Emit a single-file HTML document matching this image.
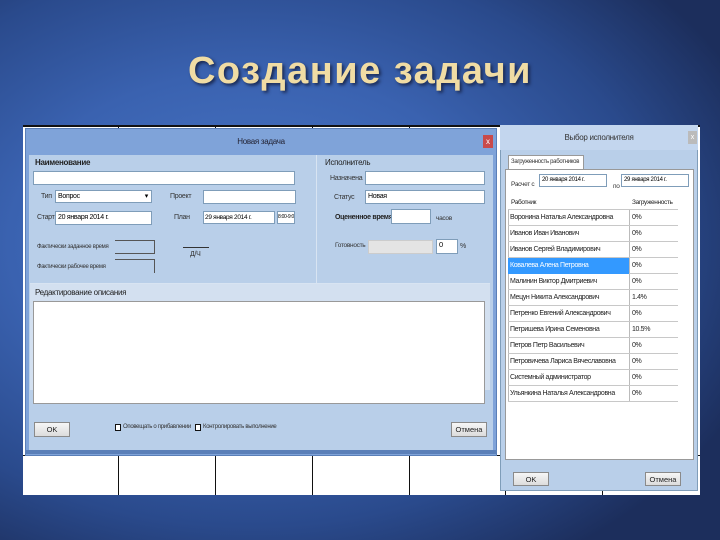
<!DOCTYPE html>
<html><head><meta charset="utf-8"><style>
*{margin:0;padding:0;box-sizing:border-box}
body{width:720px;height:540px;overflow:hidden;position:relative;font-family:"Liberation Sans",sans-serif;
background:radial-gradient(ellipse 75% 70% at 35% 45%,#4a78c8 0%,#3a62b0 45%,#2a4a8c 75%,#1c2e5c 100%);}
.a{position:absolute}
h1{position:absolute;left:0;width:720px;top:50px;text-align:center;font:bold 38px "Liberation Sans",sans-serif;color:#f0dca4;text-shadow:2px 2px 3px #1a2850;letter-spacing:1.5px}
.t{font-size:7px;color:#333;white-space:nowrap;letter-spacing:-0.3px}
.in{background:#fff;border:1px solid #7f9db9;white-space:nowrap;overflow:hidden;letter-spacing:-0.3px}
.vl{position:absolute;top:125px;height:370px;width:1px;background:#111}
.btn{position:absolute;background:linear-gradient(#f6f6f6,#dcdcdc);border:1px solid #8a8a8a;font-size:7.5px;text-align:center;line-height:13px;color:#222}
.row{position:absolute;left:508px;width:170px;height:16px;border-bottom:1px solid #c8c8c8;font-size:7px;color:#222;line-height:15px;letter-spacing:-0.35px;white-space:nowrap}
.row span{position:absolute}
</style></head><body>
<h1>Создание задачи</h1>
<div class="a" style="left:23px;top:125px;width:677px;height:370px;background:#fff"></div>
<div class="a" style="left:23px;top:125px;width:677px;height:2px;background:#111"></div>
<div class="a" style="left:23px;top:455px;width:677px;height:1px;background:#111"></div>
<div class="vl" style="left:118px"></div><div class="vl" style="left:215px"></div><div class="vl" style="left:312px"></div><div class="vl" style="left:409px"></div><div class="vl" style="left:505px"></div><div class="vl" style="left:602px"></div>

<!-- left dialog -->
<div class="a" style="left:25px;top:128px;width:472px;height:328px;background:#7fa3d9;border:1px solid #5a7fb8"></div>
<div class="a t" style="left:25px;top:137px;width:472px;text-align:center;font-size:8px;color:#223">Новая задача</div>
<div class="a" style="left:483px;top:135px;width:10px;height:13px;background:#c84a4a;color:#fff;font-size:8px;text-align:center;line-height:13px">x</div>
<div class="a" style="left:29px;top:155px;width:464px;height:296px;background:#b9cfe9"></div>
<div class="a" style="left:316px;top:155px;width:1px;height:128px;background:#d8e4f2"></div>
<div class="a" style="left:30px;top:283px;width:460px;height:1px;background:#d8e4f2"></div>
<div class="a t" style="left:35px;top:158px;font-size:8px;font-weight:bold;color:#222">Наименование</div>
<div class="a in" style="left:33px;top:171px;width:262px;height:14px"></div>
<div class="a t" style="left:41px;top:193px">Тип</div>
<div class="a in" style="left:55px;top:190px;width:97px;height:13px;font-size:7px;padding-left:2px;line-height:11px">Вопрос<span style="position:absolute;right:3px">▾</span></div>
<div class="a t" style="left:37px;top:214px">Старт</div>
<div class="a in" style="left:55px;top:211px;width:97px;height:14px;font-size:7px;padding-left:2px;line-height:12px">20 января 2014 г.</div>
<div class="a t" style="left:170px;top:193px">Проект</div>
<div class="a in" style="left:203px;top:190px;width:93px;height:14px"></div>
<div class="a t" style="left:174px;top:214px">План</div>
<div class="a in" style="left:203px;top:211px;width:72px;height:13px;font-size:6.5px;padding-left:1px;line-height:11px">29 января 2014 г.</div>
<div class="a in" style="left:277px;top:211px;width:18px;height:13px;font-size:5px;line-height:11px">8:00-9:00</div>
<div class="a t" style="left:37px;top:244px;font-size:6px">Фактически заданное время</div>
<div class="a" style="left:115px;top:240px;width:40px;height:14px;border:1px solid #555;border-left:none"></div>
<div class="a t" style="left:37px;top:264px;font-size:6px">Фактически рабочее время</div>
<div class="a" style="left:115px;top:259px;width:40px;height:14px;border-top:1px solid #555;border-right:1px solid #555"></div>
<div class="a" style="left:183px;top:247px;width:26px;height:1px;background:#333"></div>
<div class="a t" style="left:190px;top:251px">Д/Ч</div>
<div class="a t" style="left:325px;top:158px;font-size:8px;color:#222">Исполнитель</div>
<div class="a t" style="left:330px;top:175px">Назначена</div>
<div class="a in" style="left:365px;top:171px;width:120px;height:14px"></div>
<div class="a t" style="left:334px;top:194px">Статус</div>
<div class="a in" style="left:365px;top:190px;width:120px;height:14px;font-size:7px;padding-left:2px;line-height:12px">Новая</div>
<div class="a t" style="left:335px;top:214px;font-weight:bold;color:#222">Оцененное время</div>
<div class="a in" style="left:391px;top:209px;width:40px;height:15px"></div>
<div class="a t" style="left:436px;top:215px;font-size:6.5px">часов</div>
<div class="a t" style="left:335px;top:242px;font-size:6.5px">Готовность</div>
<div class="a" style="left:368px;top:240px;width:65px;height:14px;background:#e4e4e4;border:1px solid #ccc"></div>
<div class="a in" style="left:436px;top:239px;width:22px;height:15px;font-size:7.5px;padding-left:2px">0</div>
<div class="a t" style="left:460px;top:243px">%</div>
<div class="a" style="left:30px;top:284px;width:460px;height:106px;background:#d3e0f0"></div>
<div class="a t" style="left:35px;top:288px;font-size:8px;color:#222">Редактирование описания</div>
<div class="a" style="left:33px;top:301px;width:452px;height:103px;background:#fff;border:1px solid #999"></div>
<div class="btn" style="left:34px;top:422px;width:36px;height:15px">OK</div>
<div class="a" style="left:115px;top:424px;width:6px;height:7px;border:1px solid #111;background:#fff"></div>
<div class="a t" style="left:123px;top:424px;font-size:6px">Оповещать о прибавлении</div>
<div class="a" style="left:195px;top:424px;width:6px;height:7px;border:1px solid #111;background:#fff"></div>
<div class="a t" style="left:203px;top:424px;font-size:6px">Контролировать выполнение</div>
<div class="btn" style="left:451px;top:422px;width:36px;height:15px">Отмена</div>
<div class="a" style="left:25px;top:450px;width:472px;height:4px;background:#5a7fb8"></div>

<!-- right dialog -->
<div class="a" style="left:500px;top:125px;width:198px;height:366px;background:#b9cfe9;border:1px solid #7f9db9"></div>
<div class="a" style="left:500px;top:125px;width:198px;height:25px;background:#c3d6ee"></div>
<div class="a t" style="left:500px;top:133px;width:198px;text-align:center;font-size:8px">Выбор исполнителя</div>
<div class="a" style="left:688px;top:131px;width:9px;height:13px;background:#bbb;color:#fff;font-size:7px;text-align:center;line-height:13px">x</div>
<div class="a" style="left:508px;top:155px;width:76px;height:14px;background:#fff;border:1px solid #999;border-bottom:none;font-size:6px;padding:3px 2px;color:#333;white-space:nowrap;letter-spacing:-0.3px;overflow:hidden">Загруженность работников</div>
<div class="a" style="left:505px;top:169px;width:189px;height:291px;background:#fff;border:1px solid #999"></div>
<div class="a t" style="left:511px;top:181px;font-size:6.5px">Расчет с</div>
<div class="a in" style="left:539px;top:174px;width:68px;height:13px;font-size:6px;padding-left:2px;line-height:11px">20 января 2014 г.</div>
<div class="a t" style="left:613px;top:183px;font-size:6.5px">по</div>
<div class="a in" style="left:621px;top:174px;width:68px;height:13px;font-size:6px;padding-left:2px;line-height:11px">29 января 2014 г.</div>
<div class="a" style="left:508px;top:196px;width:170px;height:205px;border-left:1px solid #bbb"></div>
<div class="a" style="left:629px;top:196px;width:1px;height:205px;background:#bbb"></div>
<div class="row" style="top:195px;height:15px;background:#fff"><span style="left:3px;font-size:6.5px">Работник</span><span style="left:124px;font-size:6.5px">Загруженность</span></div>
<div class="row" style="top:210px"><span style="left:2px">Воронина Наталья Александровна</span><span style="left:124px">0%</span></div>
<div class="row" style="top:226px"><span style="left:2px">Иванов Иван Иванович</span><span style="left:124px">0%</span></div>
<div class="row" style="top:242px"><span style="left:2px">Иванов Сергей Владимирович</span><span style="left:124px">0%</span></div>
<div class="row" style="top:258px"><span style="left:0;width:121px;height:16px;background:#3399ff;color:#fff;padding-left:2px">Ковалева Алена Петровна</span><span style="left:124px">0%</span></div>
<div class="row" style="top:274px"><span style="left:2px">Малинин Виктор Дмитриевич</span><span style="left:124px">0%</span></div>
<div class="row" style="top:290px"><span style="left:2px">Мецун Никита Александрович</span><span style="left:124px">1.4%</span></div>
<div class="row" style="top:306px"><span style="left:2px">Петренко Евгений Александрович</span><span style="left:124px">0%</span></div>
<div class="row" style="top:322px"><span style="left:2px">Петришева Ирина Семеновна</span><span style="left:124px">10.5%</span></div>
<div class="row" style="top:338px"><span style="left:2px">Петров Петр Васильевич</span><span style="left:124px">0%</span></div>
<div class="row" style="top:354px"><span style="left:2px">Петровичева Лариса Вячеславовна</span><span style="left:124px">0%</span></div>
<div class="row" style="top:370px"><span style="left:2px">Системный администратор</span><span style="left:124px">0%</span></div>
<div class="row" style="top:386px"><span style="left:2px">Ульянкина Наталья Александровна</span><span style="left:124px">0%</span></div>
<div class="btn" style="left:513px;top:472px;width:36px;height:14px">OK</div>
<div class="btn" style="left:645px;top:472px;width:36px;height:14px">Отмена</div>
</body></html>
